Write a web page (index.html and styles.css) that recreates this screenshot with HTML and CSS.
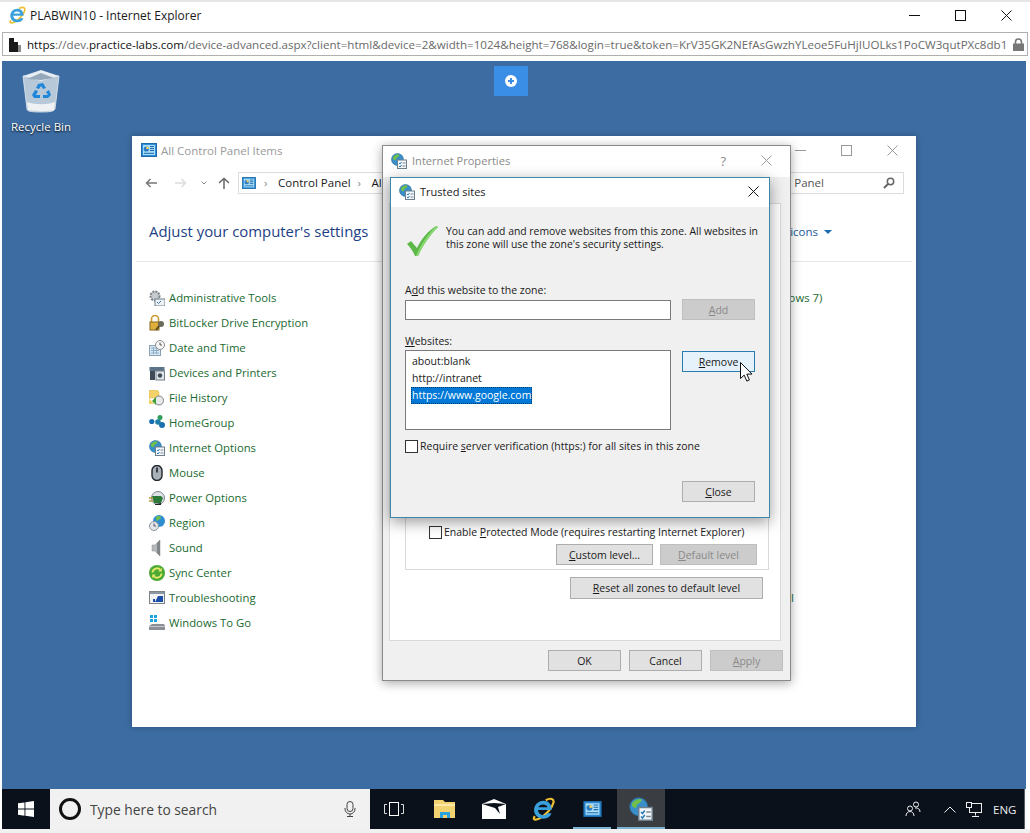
FILE: index.html
```html
<!DOCTYPE html>
<html lang="en">

<head>
    <meta charset="UTF-8">
    <meta name="viewport" content="width=device-width, initial-scale=1.0" />
    <title>PLABWIN10 - Internet Explorer</title>
    <link rel="stylesheet" href="styles.css">
</head>

<body>
    <!-- Shared icons -->
    <svg class="defs" width="0" height="0">
        <symbol id="i-panel" viewBox="0 0 16 14">
            <rect x="0.5" y="0.5" width="15" height="13" fill="#2f8fd8" stroke="#1c6aa8" />
            <rect x="2" y="2" width="12" height="10" fill="#a9dcf7" />
            <circle cx="5.3" cy="6" r="2.6" fill="#2b7cc4" />
            <path d="M5.3 6V3.4A2.6 2.6 0 0 1 7.9 6z" fill="#ffd25a" />
            <path d="M9 3.5h4M9 5.5h4M9 7.5h4M3 10.3h10" stroke="#1c6aa8" />
        </symbol>
        <symbol id="i-globe" viewBox="0 0 16 16">
            <circle cx="6.5" cy="6.5" r="6" fill="#3a8fc9" stroke="#2a6d9c" stroke-width="0.6" />
            <path d="M2 4c2-2 4-3 6-2.6 1 1 0 2-1 2.6S5 5 5 6.500 3 7 2 6z" fill="#6fbf4a" />
            <path d="M8 7c2 0 3 1 2.500 3L8.500 12 7.500 9z" fill="#6fbf4a" />
            <rect x="6.500" y="7" width="9" height="8.500" fill="#f4f7fa" stroke="#6d7f8c" />
            <path d="M8 10l1 1 1.500-2M8 13l1 1 1.500-2" stroke="#2a7ab8" fill="none" />
            <path d="M11.500 10h3M11.500 13h3" stroke="#7c8a94" />
        </symbol>
        <symbol id="i-ie" viewBox="0 0 22 22">
            <path d="M3.500 17.500C1 21 4 21.500 8 19.500 13 17 19 11 20.500 5.500 21.500 1.500 18 0.500 13.500 3" fill="none" stroke="#eec033" stroke-width="2" />
            <path d="M6.400 12H19C19.200 6.500 15.500 3.500 11.500 3.500 6.500 3.500 2.800 7.500 2.800 12S6.500 20 11.500 20C15 20 17.800 18.300 18.800 15H14.800C14 16.200 12.900 16.700 11.500 16.700 8.800 16.700 6.600 14.800 6.400 12ZM6.800 9.300C7.300 7.800 9.200 6.800 11 6.800 12.900 6.800 14.800 7.800 15.200 9.300Z" fill="#3aa0dc" fill-rule="evenodd" />
        </symbol>
    </svg>

    <div class="browser">
        <!-- IE title bar -->
        <div class="titlebar">
            <svg class="ie-logo" width="18" height="18"><use href="#i-ie" /></svg>
            <span>PLABWIN10 - Internet Explorer</span>
            <div class="win-controls">
                <svg width="11" height="11" viewBox="0 0 11 11"><path d="M0 5.500h11" stroke="#111" /></svg>
                <svg width="11" height="11" viewBox="0 0 11 11"><rect x="0.500" y="0.500" width="10" height="10" fill="none" stroke="#111" /></svg>
                <svg width="11" height="11" viewBox="0 0 11 11"><path d="M0.500 0.500l10 10M10.500 0.500l-10 10" stroke="#111" /></svg>
            </div>
        </div>

        <!-- Address bar -->
        <div class="urlbar">
            <svg class="favicon" width="14" height="15" viewBox="0 0 14 15">
                <path d="M1 1h5v14H1zM6 5h4v10H6z" fill="#1a1a1a" />
                <path d="M10 8h3v7h-3z" fill="#8a8a8a" />
            </svg>
            <div class="url"><b>https</b>://dev.<b>practice-labs.com</b>/device-advanced.aspx?client=html&amp;device=2&amp;width=1024&amp;height=768&amp;login=true&amp;token=KrV35GK2NEfAsGwzhYLeoe5FuHjIUOLks1PoCW3qutPXc8db1</div>
            <svg class="lock" width="11" height="13" viewBox="0 0 11 13">
                <path d="M2.500 6V4a3 3 0 0 1 6 0v2" fill="none" stroke="#777" stroke-width="1.600" />
                <rect y="5.500" width="11" height="7.500" fill="#777" />
            </svg>
        </div>

        <div class="desktop">
            <!-- Recycle bin -->
            <div class="recycle">
                <svg width="40" height="44" viewBox="0 0 40 44">
                    <path d="M2 7l4 33c0 2 3 3 14 3s13-1 14-3l4-33z" fill="#cdd8e2" fill-opacity="0.85" stroke="#e4ebf1" stroke-width="0.800" />
                    <path d="M2 7l18-6 18 6-18 5z" fill="#e6ecf1" />
                    <path d="M6 10l14-6 13 5-13 2z" fill="#93a8ba" />
                    <path d="M6 33c8 3 20 3 28 0l-1 8c-2 1.500-24 1.500-26 0z" fill="#eef2f5" />
                    <path d="M17 15l5-1 3 5-3 1-2-3-2 3-3-1zM11 26l3-5 3 1-2 4h4v3h-6zM28 21l2 5-3 3h-5v-3h5l-2-3z" fill="#1f86d8" />
                </svg>
                <span>Recycle Bin</span>
            </div>

            <!-- Remote session toolbar button -->
            <div class="session-btn">
                <svg width="12" height="12" viewBox="0 0 12 12">
                    <circle cx="6" cy="6" r="6" fill="#fff" />
                    <path d="M6 3v6M3 6h6" stroke="#3a8ee6" stroke-width="2" />
                </svg>
            </div>

            <!-- Control Panel window -->
            <div class="cp-window">
                <div class="cp-title">
                    <svg width="16" height="14"><use href="#i-panel" /></svg>
                    <span>All Control Panel Items</span>
                    <div class="cp-controls">
                        <svg width="11" height="11" viewBox="0 0 11 11"><path d="M0 5.500h11" stroke="#999" /></svg>
                        <svg width="11" height="11" viewBox="0 0 11 11"><rect x="0.500" y="0.500" width="10" height="10" fill="none" stroke="#999" /></svg>
                        <svg width="11" height="11" viewBox="0 0 11 11"><path d="M0.500 0.500l10 10M10.500 0.500l-10 10" stroke="#999" /></svg>
                    </div>
                </div>
                <div class="cp-nav">
                    <svg class="nav-back" width="12" height="10" viewBox="0 0 12 10"><path d="M12 5H1.500M5.500 1L1.500 5l4 4" fill="none" stroke="#777" stroke-width="1.500" /></svg>
                    <svg class="nav-fwd" width="12" height="10" viewBox="0 0 12 10"><path d="M0 5h10.500M6.500 1l4 4-4 4" fill="none" stroke="#ddd" stroke-width="1.500" /></svg>
                    <svg class="nav-down" width="6" height="4" viewBox="0 0 6 4"><path d="M0.500 0.500L3 3l2.500-2.500" fill="none" stroke="#888" /></svg>
                    <svg class="nav-up" width="12" height="12" viewBox="0 0 12 12"><path d="M6 12V1.500M1 6l5-4.500L11 6" fill="none" stroke="#666" stroke-width="1.500" /></svg>
                    <div class="cp-address">
                        <svg width="16" height="12"><use href="#i-panel" /></svg>
                        <span class="crumb-sep">›</span>
                        <span>Control Panel</span>
                        <span class="crumb-sep">›</span>
                        <span>All Control Panel Items</span>
                    </div>
                    <div class="cp-search">
                        <span>Search Control Panel</span>
                        <svg width="12" height="12" viewBox="0 0 12 12">
                            <circle cx="7.500" cy="4.500" r="3.200" fill="none" stroke="#666" stroke-width="1.500" />
                            <path d="M5 7l-4 4" stroke="#666" stroke-width="2" />
                        </svg>
                    </div>
                </div>
                <div class="cp-header">
                    <h1>Adjust your computer's settings</h1>
                    <div class="view-by">View by: Small icons <i class="caret"></i></div>
                </div>
                <div class="cp-lists">
                    <ul class="cp-list">
                        <li>
                            <svg width="16" height="16" viewBox="0 0 16 16"><circle cx="6" cy="6" r="4.500" fill="#c6cbd0" stroke="#7d858c" stroke-dasharray="2 1" stroke-width="2" /><rect x="6" y="9" width="10" height="7" fill="#eef2f5" stroke="#6d7f8c" /><path d="M8 12l1.500 1.500L12 11" stroke="#3a7ab0" fill="none" /></svg>
                            <a>Administrative Tools</a>
                        </li>
                        <li>
                            <svg width="16" height="16" viewBox="0 0 16 16"><path d="M2.500 7V4a3.500 3.500 0 0 1 7 0v3" fill="none" stroke="#c9992f" stroke-width="1.600" /><rect x="1" y="7" width="9" height="8" fill="#e0ae3c" stroke="#8a6a1c" /><circle cx="12" cy="9" r="3" fill="#6b6b5c" /><path d="M10 11l-3 4" stroke="#5a4a20" stroke-width="2" /></svg>
                            <a>BitLocker Drive Encryption</a>
                        </li>
                        <li>
                            <svg width="16" height="16" viewBox="0 0 16 16"><rect x="0.500" y="5.500" width="11" height="10" fill="#d8e6f2" stroke="#8aa0b4" /><path d="M2 8h8M2 10.500h8M2 13h8M4.500 7v7M7.500 7v7" stroke="#8fb0cc" /><circle cx="11" cy="5" r="4.500" fill="#f6f6f6" stroke="#8a8a8a" /><path d="M11 2.500V5h2" stroke="#555" fill="none" /></svg>
                            <a>Date and Time</a>
                        </li>
                        <li>
                            <svg width="16" height="16" viewBox="0 0 16 16"><rect x="0.500" y="2" width="15" height="4" fill="#5c7486" /><rect x="1" y="6" width="5" height="9" fill="#3f4c57" /><rect x="7" y="6" width="8.500" height="9" fill="#e1e5e8" stroke="#71808c" /><circle cx="11" cy="10.500" r="2.200" fill="#3f4c57" /></svg>
                            <a>Devices and Printers</a>
                        </li>
                        <li>
                            <svg width="16" height="16" viewBox="0 0 16 16"><path d="M0 0h8l2 2v6H0z" fill="#f3d26a" stroke="#d3b04a" stroke-width="0.500" /><path d="M0 8v6h5" fill="#f3d26a" /><circle cx="10" cy="10.500" r="4.500" fill="#e8eaec" stroke="#7c848a" /><path d="M3 11l4-4v8z" fill="#3f9e3a" /></svg>
                            <a>File History</a>
                        </li>
                        <li>
                            <svg width="16" height="16" viewBox="0 0 16 16"><circle cx="2.800" cy="6.500" r="2.600" fill="#1a6fb0" /><circle cx="11" cy="2.500" r="2.500" fill="#2f9e58" /><circle cx="13" cy="10" r="3" fill="#1a6fb0" /><circle cx="9" cy="7" r="2.800" fill="#1f7fa8" /></svg>
                            <a>HomeGroup</a>
                        </li>
                        <li>
                            <svg width="16" height="16"><use href="#i-globe" /></svg>
                            <a>Internet Options</a>
                        </li>
                        <li>
                            <svg width="16" height="16" viewBox="0 0 16 16"><rect x="3" y="0.500" width="10" height="15" rx="5" fill="#a8b0b8" stroke="#20262b" stroke-width="1.400" /><rect x="7.200" y="2.500" width="1.600" height="5" fill="#20262b" /></svg>
                            <a>Mouse</a>
                        </li>
                        <li>
                            <svg width="16" height="16" viewBox="0 0 16 16"><circle cx="9" cy="8" r="6.500" fill="#dde2e6" stroke="#7d858c" /><path d="M3 6h9l2 2-2 5H5z" fill="#2c7a3a" /><path d="M0 8h4M0 11h4" stroke="#b59a3c" stroke-width="1.500" /><path d="M6 14l6-1v2H6z" fill="#20262b" /></svg>
                            <a>Power Options</a>
                        </li>
                        <li>
                            <svg width="16" height="16" viewBox="0 0 16 16"><circle cx="10" cy="6" r="6" fill="#2f8ed2" /><path d="M7 2c2-1.500 4-1 5 0 0 2-2 2-3 3.500S7 5 7 2z" fill="#6fbf4a" /><circle cx="5" cy="11" r="4.500" fill="#e2e6ea" stroke="#8a949c" /><path d="M5 8.500V11h2" stroke="#556" fill="none" /></svg>
                            <a>Region</a>
                        </li>
                        <li>
                            <svg width="16" height="16" viewBox="0 0 16 16"><path d="M3 5h3l5-5v16l-5-5H3z" fill="#b4b8bb" stroke="#8c9195" stroke-width="0.500" /><path d="M8 3v10l3 3V0z" fill="#808589" /></svg>
                            <a>Sound</a>
                        </li>
                        <li>
                            <svg width="16" height="16" viewBox="0 0 16 16"><circle cx="8" cy="8" r="8" fill="#4caa34" /><path d="M3.500 7.500A4.500 4.500 0 0 1 11.500 5M12.500 8.500A4.500 4.500 0 0 1 4.500 11" fill="none" stroke="#e6e86a" stroke-width="1.800" /><path d="M12.800 2.800v3.600H9.200zM3.200 13.200V9.600h3.600z" fill="#e6e86a" /></svg>
                            <a>Sync Center</a>
                        </li>
                        <li>
                            <svg width="16" height="16" viewBox="0 0 16 16"><rect x="0.500" y="1.500" width="15" height="12" fill="#f0f2f4" stroke="#7c848a" /><rect x="1" y="2" width="14" height="2" fill="#8a97a2" /><path d="M6 12l3-6h5v6zM4 12V9h2v3z" fill="#1c50a8" /></svg>
                            <a>Troubleshooting</a>
                        </li>
                        <li>
                            <svg width="16" height="16" viewBox="0 0 16 16"><path d="M1 0h3v3H1zM5 0h3v3H5zM1 4h3v3H1zM5 4h3v3H5z" fill="#1ca4e0" /><path d="M0 11l3-2h12l1 2v4H0z" fill="#8a9096" /><path d="M0 11h16v1H0z" fill="#c4c8cc" /></svg>
                            <a>Windows To Go</a>
                        </li>
                    </ul>
                    <ul class="cp-list cp-list-right">
                        <li><a>Backup and Restore (Windows 7)</a></li>
                        <li class="last-row"><a>Windows Defender Firewall</a></li>
                    </ul>
                </div>
            </div>

            <!-- Internet Properties dialog -->
            <div class="props-dialog">
                <div class="props-title">
                    <svg width="16" height="16"><use href="#i-globe" /></svg>
                    <span>Internet Properties</span>
                    <span class="props-help">?</span>
                    <svg class="props-close" width="11" height="11" viewBox="0 0 11 11"><path d="M0.500 0.500l10 10M10.500 0.500l-10 10" stroke="#999" /></svg>
                </div>
                <div class="props-page">
                    <div class="group-box">
                        <label class="check-row"><i class="check-box"></i><span>Enable <u>P</u>rotected Mode (requires restarting Internet Explorer)</span></label>
                        <div class="btn-row">
                            <button class="btn btn-level"><u>C</u>ustom level...</button>
                            <button class="btn btn-level btn-off"><u>D</u>efault level</button>
                        </div>
                    </div>
                    <div class="reset-row">
                        <button class="btn btn-reset"><u>R</u>eset all zones to default level</button>
                    </div>
                </div>
                <div class="props-footer">
                    <button class="btn">OK</button>
                    <button class="btn">Cancel</button>
                    <button class="btn btn-off"><u>A</u>pply</button>
                </div>
            </div>

            <!-- Trusted sites dialog -->
            <div class="sites-dialog">
                <div class="sites-title">
                    <svg width="16" height="16"><use href="#i-globe" /></svg>
                    <span>Trusted sites</span>
                    <svg class="sites-close" width="11" height="11" viewBox="0 0 11 11"><path d="M0.500 0.500l10 10M10.500 0.500l-10 10" stroke="#111" /></svg>
                </div>
                <div class="sites-body">
                    <div class="intro">
                        <svg width="32" height="32" viewBox="0 0 32 32">
                            <path d="M1 19l4-3 6 7C16 13 22 6 30 1l2 1C24 10 17 20 12 31H9C7 26 4 22 1 19z" fill="#5cb848" />
                            <path d="M30 1l2 1C24 10 17 20 12 31h-2C15 19 22 9 30 1z" fill="#8ad874" />
                        </svg>
                        <p>You can add and remove websites from this zone. All websites in<br>this zone will use the zone's security settings.</p>
                    </div>
                    <div class="field-label first-label">A<u>d</u>d this website to the zone:</div>
                    <div class="field-row">
                        <div class="text-input"></div>
                        <button class="btn btn-off"><u>A</u>dd</button>
                    </div>
                    <div class="field-label"><u>W</u>ebsites:</div>
                    <div class="field-row list-row">
                        <ul class="site-list">
                            <li>about:blank</li>
                            <li>http://intranet</li>
                            <li class="selected">https://www.google.com</li>
                        </ul>
                        <button class="btn btn-focus"><u>R</u>emove</button>
                    </div>
                    <label class="check-row verify-row"><i class="check-box"></i><span>Require <u>s</u>erver verification (https:) for all sites in this zone</span></label>
                    <div class="close-row">
                        <button class="btn"><u>C</u>lose</button>
                    </div>
                </div>
                <!-- Mouse pointer -->
                <svg class="pointer" width="13" height="20" viewBox="0 0 13 20">
                    <path d="M0.500 0.500v16l3.700-3.400 2.600 6 2.600-1.100-2.600-5.900h5.200z" fill="#fff" stroke="#111" />
                </svg>
            </div>
        </div>

        <!-- Taskbar -->
        <div class="taskbar">
            <div class="start">
                <svg width="16" height="16" viewBox="0 0 16 16"><path d="M0 2.300l6.500-.9v6.200H0zM7.400 1.300L16 0v7.600H7.400zM0 8.500h6.500v6.200L0 13.700zM7.400 8.500H16V16l-8.600-1.200z" fill="#fff" /></svg>
            </div>
            <div class="search-box">
                <i class="cortana"></i>
                <span>Type here to search</span>
                <svg class="mic" width="12" height="16" viewBox="0 0 12 16"><rect x="3" y="0.500" width="6" height="10" rx="3" fill="none" stroke="#444" /><path d="M1 7v1a5 5 0 0 0 10 0V7M6 13v2M3 15.500h6" fill="none" stroke="#444" /></svg>
            </div>
            <div class="task-view">
                <svg width="20" height="14" viewBox="0 0 20 14"><rect x="5.500" y="0.500" width="9" height="13" fill="none" stroke="#fff" /><path d="M3 2.500H0.500v9H3M17 2.500h2.500v9H17" fill="none" stroke="#ddd" /></svg>
            </div>
            <div class="task-apps">
                <div class="task-btn">
                    <svg width="22" height="18" viewBox="0 0 22 18"><path d="M0 0h9l2 2h10v16H0z" fill="#f3d272" /><path d="M0 4h21v2H0z" fill="#ffe9a6" /><path d="M6 12h10v6h-3v-3H9v3H6z" fill="#2ba3dc" /></svg>
                </div>
                <div class="task-btn">
                    <svg width="24" height="20" viewBox="0 0 24 20"><path d="M0 5L12 0l12 5v15H0z" fill="#fff" /><path d="M0 5l13 4 5 6-2-7 8-3-12-1z" fill="#0b111b" /></svg>
                </div>
                <div class="task-btn">
                    <svg width="24" height="24"><use href="#i-ie" /></svg>
                </div>
                <div class="task-btn open">
                    <svg width="21" height="16"><use href="#i-panel" /></svg>
                </div>
                <div class="task-btn open active">
                    <svg width="24" height="24"><use href="#i-globe" /></svg>
                </div>
            </div>
            <div class="tray">
                <svg class="tray-people" width="16" height="16" viewBox="0 0 16 16"><circle cx="5" cy="7.500" r="2.500" fill="none" stroke="#eee" /><path d="M1 15c0-3 2-4.500 4-4.500s4 1.500 4 4.500" fill="none" stroke="#eee" /><circle cx="11" cy="3.500" r="2.500" fill="none" stroke="#eee" /><path d="M10 7c3-.5 5 1 5 4" fill="none" stroke="#eee" /></svg>
                <svg class="tray-chevron" width="12" height="7" viewBox="0 0 12 7"><path d="M0.500 6.500L6 1l5.500 5.500" fill="none" stroke="#eee" /></svg>
                <svg class="tray-net" width="16" height="15" viewBox="0 0 16 15"><rect x="3.500" y="1.500" width="12" height="9" fill="none" stroke="#eee" /><rect x="0.500" y="0.500" width="5" height="5" fill="#0b111b" stroke="#eee" /><path d="M9.500 10.500v3M6 14.500h7" stroke="#eee" /></svg>
                <span class="tray-lang">ENG</span>
            </div>
        </div>
    </div>
</body>

</html>
```

FILE: styles.css
```css
/* Reset some basic styles */
* {
    margin: 0;
    padding: 0;
    box-sizing: border-box;
}

body {
    font-family: 'Open Sans', 'Noto Sans', sans-serif;
    font-size: 11.5px;
    color: #1a1a1a;
    background-color: #fff;
    overflow: hidden;
}

ul {
    list-style: none;
}

svg {
    display: block;
    flex-shrink: 0;
}

.defs {
    position: absolute;
}

.browser {
    display: flex;
    flex-direction: column;
    width: 1030px;
    height: 833px;
    border-top: 2px solid #e6e6e6;
    border-bottom: 4px solid #f0f0f0;
}

/* IE title bar */
.titlebar {
    display: flex;
    align-items: center;
    height: 30px;
    padding-left: 8px;
    padding-bottom: 4px;
    font-size: 12px;
}

.ie-logo {
    margin-right: 4px;
}

.win-controls {
    display: flex;
    gap: 35px;
    margin-left: auto;
    margin-right: 18px;
}

/* Address bar */
.urlbar {
    display: flex;
    align-items: center;
    height: 24px;
    margin: 0 2px 5px 2px;
    padding-left: 5px;
    border: 1px solid #b0b0b0;
}

.favicon {
    margin-right: 5px;
}

.url {
    flex: 1;
    white-space: nowrap;
    overflow: hidden;
    color: #6a6a6a;
    font-size: 11.6px;
}

.url b {
    font-weight: normal;
    color: #111;
}

.lock {
    margin-right: 3px;
}

/* Desktop */
.desktop {
    position: relative;
    flex: 1;
    margin: 0 4px 0 2px;
    background-color: #3c6ca2;
}

.recycle {
    position: absolute;
    left: 0;
    top: 8px;
    width: 78px;
    display: flex;
    flex-direction: column;
    align-items: center;
    color: #fff;
    text-shadow: 0 1px 2px #000;
}

.recycle span {
    margin-top: 6px;
}

.session-btn {
    position: absolute;
    left: 492px;
    top: 5px;
    width: 34px;
    height: 30px;
    display: flex;
    align-items: center;
    justify-content: center;
    background-color: #3a8ee6;
}

/* Control Panel window */
.cp-window {
    position: absolute;
    left: 130px;
    top: 75px;
    width: 784px;
    height: 591px;
    background-color: #fff;
    box-shadow: 0 0 6px rgba(0, 0, 0, 0.25);
}

.cp-title {
    display: flex;
    align-items: center;
    height: 30px;
    padding-left: 9px;
    padding-bottom: 2px;
    color: #9a9a9a;
}

.cp-title span {
    margin-left: 4px;
}

.cp-controls {
    display: flex;
    gap: 35px;
    margin-left: auto;
    margin-right: 18px;
}

.cp-nav {
    display: flex;
    align-items: center;
    height: 22px;
    margin-top: 6px;
    padding-left: 13px;
    padding-right: 12px;
}

.nav-fwd {
    margin-left: 18px;
}

.nav-down {
    margin-left: 14px;
}

.nav-up {
    margin-left: 11px;
}

.cp-address {
    display: flex;
    align-items: center;
    gap: 7px;
    width: 460px;
    height: 22px;
    margin-left: 8px;
    padding-left: 2px;
    padding-bottom: 1px;
    border: 1px solid #dcdcdc;
    white-space: nowrap;
}

.crumb-sep {
    width: 7px;
    color: #888;
}

.cp-search {
    display: flex;
    align-items: center;
    justify-content: space-between;
    flex: 1;
    height: 22px;
    margin-left: 8px;
    padding: 0 8px 1px 5px;
    border: 1px solid #dcdcdc;
    color: #555;
    white-space: nowrap;
}

.cp-header {
    display: flex;
    align-items: center;
    justify-content: space-between;
    height: 68px;
    margin: 0 4px;
    padding: 6px 80px 0 13px;
    border-bottom: 1px solid #e6e6e6;
}

.cp-header h1 {
    font-size: 14.9px;
    font-weight: normal;
    color: #1c3f85;
}

.view-by {
    padding-top: 1px;
    color: #1c5a9c;
}

.caret {
    display: inline-block;
    margin-left: 3px;
    vertical-align: middle;
    border-left: 4px solid transparent;
    border-right: 4px solid transparent;
    border-top: 4px solid #1c6ab0;
}

.cp-lists {
    display: flex;
    justify-content: space-between;
    padding: 23px 98px 0 17px;
    font-size: 11.3px;
}

.cp-list li {
    display: flex;
    align-items: center;
    gap: 4px;
    height: 25px;
}

.cp-list a {
    color: #206a30;
}

.cp-list-right {
    width: 168px;
}

.cp-list-right li {
    white-space: nowrap;
}

.cp-list-right .last-row {
    margin-top: 275px;
}

/* Buttons */
.btn {
    width: 73px;
    height: 21px;
    font-family: inherit;
    font-size: inherit;
    color: #1a1a1a;
    background-color: #e1e1e1;
    border: 1px solid #adadad;
}

.btn-off {
    color: #8a8a8a;
    background-color: #cccccc;
    border-color: #bfbfbf;
}

.btn-focus {
    background-color: #e5f1fb;
    border-color: #2a7cb0;
}

.check-row {
    display: flex;
    align-items: center;
    gap: 2px;
    height: 16px;
}

.check-box {
    display: block;
    width: 13px;
    height: 13px;
    background-color: #fff;
    border: 1px solid #333;
}

/* Internet Properties dialog */
.props-dialog {
    position: absolute;
    left: 380px;
    top: 84px;
    width: 409px;
    height: 536px;
    background-color: #f0f0f0;
    border: 1px solid #8a8a8a;
    box-shadow: 0 2px 10px rgba(0, 0, 0, 0.35);
    font-size: 10.5px;
}

.props-title {
    display: flex;
    align-items: center;
    height: 31px;
    padding-left: 8px;
    padding-bottom: 2px;
    color: #8a8a8a;
    background-color: #fff;
    font-size: 11.1px;
}

.props-title span {
    margin-left: 5px;
}

.props-title .props-help {
    margin-left: auto;
    font-size: 13px;
}

.props-close {
    margin-left: 35px;
    margin-right: 18px;
}

.props-page {
    display: flex;
    flex-direction: column;
    justify-content: flex-end;
    height: 438px;
    margin: 26px 9px 0 6px;
    padding: 0 17px 41px 15px;
    background-color: #fff;
    border: 1px solid #d9d9d9;
}

.group-box {
    margin-right: -6px;
    padding: 60px 11px 4px 23px;
    border: 1px solid #d9d9d9;
}

.btn-row {
    display: flex;
    justify-content: flex-end;
    gap: 7px;
    margin-top: 4px;
}

.btn-level {
    width: 97px;
}

.reset-row {
    display: flex;
    justify-content: flex-end;
    margin-top: 7px;
}

.btn-reset {
    width: 193px;
    height: 22px;
}

.props-footer {
    display: flex;
    justify-content: flex-end;
    gap: 8px;
    margin-top: 9px;
    padding-right: 7px;
}

/* Trusted sites dialog */
.sites-dialog {
    position: absolute;
    left: 388px;
    top: 116px;
    width: 380px;
    height: 341px;
    display: flex;
    flex-direction: column;
    background-color: #f0f0f0;
    border: 1px solid #3d87ab;
    box-shadow: 0 4px 14px rgba(0, 0, 0, 0.4);
    font-size: 10.5px;
}

.sites-title {
    display: flex;
    align-items: center;
    height: 29px;
    padding-left: 8px;
    padding-bottom: 2px;
    background-color: #fff;
    font-size: 11px;
}

.sites-title span {
    margin-left: 5px;
}

.sites-close {
    margin-left: auto;
    margin-right: 10px;
}

.sites-body {
    flex: 1;
    display: flex;
    flex-direction: column;
    padding: 18px 14px 15px;
}

.intro {
    display: flex;
    gap: 8px;
    padding-left: 1px;
}

.intro p {
    line-height: 13px;
    white-space: nowrap;
    font-size: 10.4px;
}

.field-label {
    height: 16px;
    margin-top: 13px;
    line-height: 16px;
}

.first-label {
    margin-top: 25px;
}

.field-row {
    display: flex;
    justify-content: space-between;
    margin-top: 1px;
}

.list-row {
    margin-top: 1px;
}

.text-input {
    width: 266px;
    height: 20px;
    margin-top: 1px;
    background-color: #fff;
    border: 1px solid #7a7a7a;
}

.site-list {
    width: 266px;
    height: 80px;
    padding: 2px 5px;
    background-color: #fff;
    border: 1px solid #7a7a7a;
}

.site-list li {
    height: 17px;
    line-height: 17px;
    width: max-content;
    padding: 0 1px;
}

.site-list .selected {
    color: #fff;
    background-color: #0078d7;
    outline: 1px dotted #0a3d6a;
    outline-offset: -1px;
}

.list-row .btn {
    margin-top: 1px;
}

.verify-row {
    margin-top: 8px;
}

.close-row {
    display: flex;
    justify-content: flex-end;
    margin-top: auto;
}

.pointer {
    position: absolute;
    left: 349px;
    top: 184px;
}

/* Taskbar */
.taskbar {
    display: flex;
    height: 40px;
    margin-left: 2px;
    margin-right: 5px;
    background-color: #0b111b;
}

.start {
    width: 48px;
    display: flex;
    align-items: center;
    justify-content: center;
}

.search-box {
    display: flex;
    align-items: center;
    width: 320px;
    padding: 0 14px 0 9px;
    background-color: #f1f1f1;
    font-size: 13.8px;
    color: #444;
}

.cortana {
    width: 22px;
    height: 22px;
    border: 3px solid #111;
    border-radius: 50%;
    margin-right: 9px;
}

.mic {
    margin-left: auto;
}

.task-view {
    width: 48px;
    display: flex;
    align-items: center;
    justify-content: center;
}

.task-apps {
    display: flex;
    gap: 1px;
    padding-left: 3px;
}

.task-btn {
    position: relative;
    width: 48px;
    display: flex;
    align-items: center;
    justify-content: center;
}

.task-btn.open::after {
    content: '';
    position: absolute;
    left: 5px;
    right: 5px;
    bottom: 0;
    height: 2px;
    background-color: #7db4d4;
}

.task-btn.active {
    background-color: #3a3d42;
}

.task-btn.active::after {
    left: 0;
    right: 0;
}

.tray {
    display: flex;
    align-items: center;
    flex: 1;
    padding-left: 240px;
    color: #eee;
    font-size: 11.5px;
    border-right: 1px solid #5a5f66;
}

.tray-chevron {
    margin-left: 23px;
}

.tray-net {
    margin-left: 10px;
}

.tray-lang {
    margin-left: 11px;
}
```
